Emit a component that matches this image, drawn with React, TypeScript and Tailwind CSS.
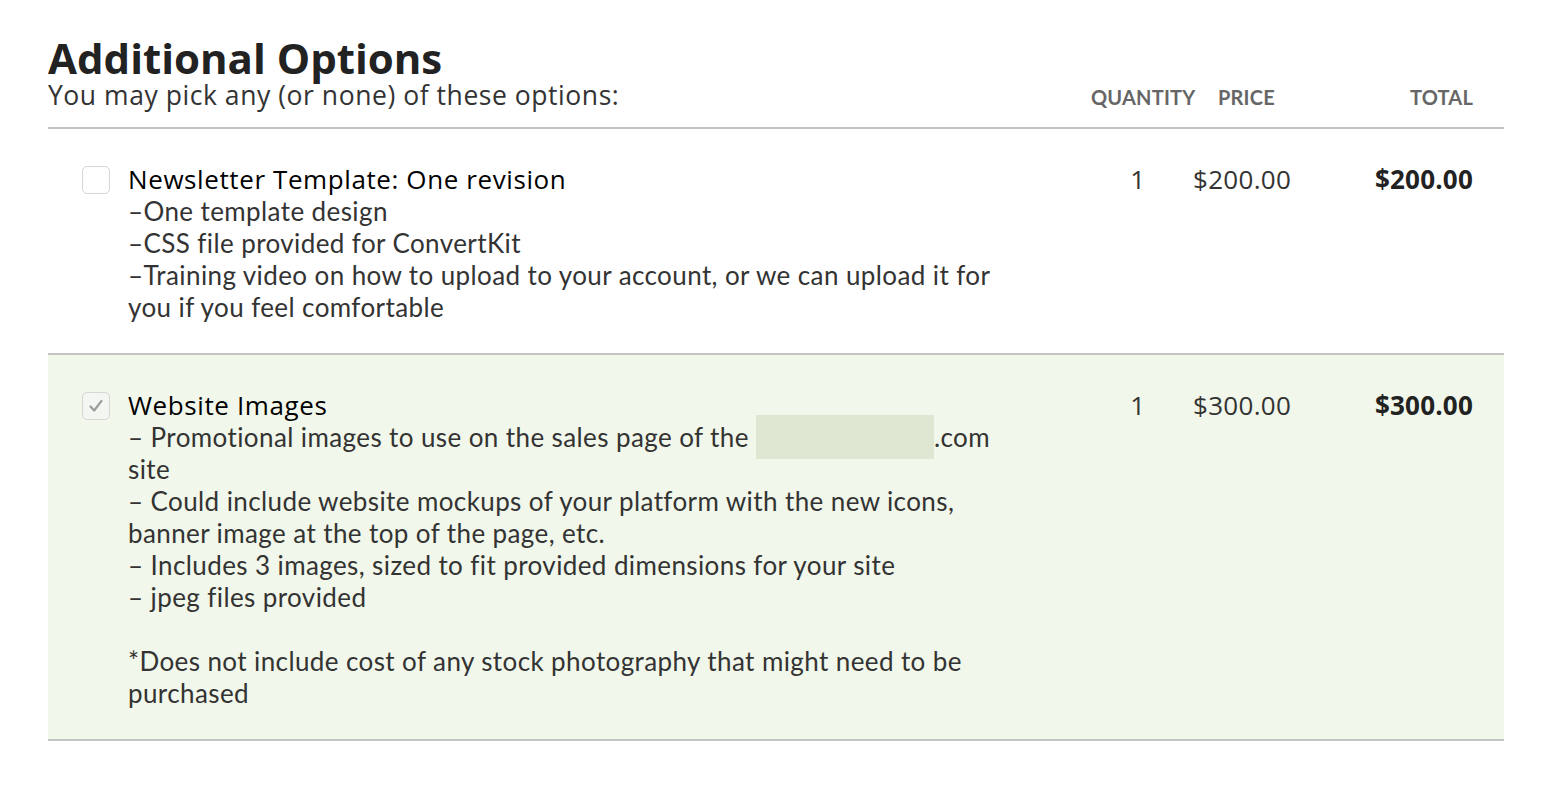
import React from "react";

const lato = { fontFamily: "Lato, 'Open Sans', sans-serif" };
const open = { fontFamily: "'Open Sans', Lato, sans-serif" };

function Check({ checked }: { checked?: boolean }) {
  return (
    <div
      className={`mt-[3px] flex h-[28px] w-[28px] shrink-0 items-center justify-center rounded-[5px] border border-[#d6d6d6] ${
        checked ? "bg-[#f4f6f1]" : "bg-white"
      }`}
    >
      {checked && (
        <svg width="18" height="18" viewBox="0 0 18 18" fill="none">
          <path d="M3.5 9.5 L7.2 13.5 L14.5 3.8" stroke="#9c9c9c" strokeWidth="2.2" fill="none" strokeLinecap="round" strokeLinejoin="round" />
        </svg>
      )}
    </div>
  );
}

function Row({
  checked,
  title,
  lines,
  qty,
  price,
  total,
  bg,
}: {
  checked?: boolean;
  title: string;
  lines: React.ReactNode[];
  qty: string;
  price: string;
  total: string;
  bg?: string;
}) {
  return (
    <div className={`flex border-b-2 border-[#c4c4c4] pt-[34px] pb-[30px] ${bg ?? ""}`}>
      <div className="flex w-[80px] shrink-0 justify-end pr-[18px]">
        <Check checked={checked} />
      </div>
      <div className="w-[882px] shrink-0 text-[26px] leading-[32px] tracking-[0.4px] text-[#333]" style={lato}>
        <div className="text-[26px] tracking-[0.6px] text-black" style={open}>
          {title}
        </div>
        {lines.map((l, i) => (
          <div key={i}>{l === "" ? "\u00a0" : l}</div>
        ))}
      </div>
      <div className="w-[135px] shrink-0 text-right text-[26px] leading-[32px] text-[#333]" style={open}>
        {qty}
      </div>
      <div className="shrink-0 pl-[48px] text-[26px] leading-[32px] tracking-[0.3px] text-[#333]" style={open}>
        {price}
      </div>
      <div className="flex-1 pr-[31px] text-right text-[26px] font-bold leading-[32px] tracking-[0.2px] text-[#222]" style={open}>
        {total}
      </div>
    </div>
  );
}

export default function App() {
  return (
    <div className="min-h-screen bg-white">
      <div className="ml-[48px] w-[1456px] pt-[36px]">
        <div className="flex items-end border-b-2 border-[#c4c4c4] pb-[17px]">
          <div className="flex-1" style={open}>
            <div className="text-[42px] font-bold leading-[44px] text-[#222]">Additional Options</div>
            <div className="text-[26.5px] leading-[30px] tracking-[0.55px] text-[#333]">You may pick any (or none) of these options:</div>
          </div>
          <div
            className="flex items-end pb-[1px] pr-[31px] text-[20px] font-bold uppercase leading-[24px] tracking-[0.2px] text-[#666]"
            style={lato}
          >
            <div className="w-[127px]">Quantity</div>
            <div className="w-[192px]">Price</div>
            <div>Total</div>
          </div>
        </div>
        <Row
          title="Newsletter Template: One revision"
          lines={[
            "\u2013One template design",
            "\u2013CSS file provided for ConvertKit",
            "\u2013Training video on how to upload to your account, or we can upload it for you if you feel comfortable",
          ]}
          qty="1"
          price="$200.00"
          total="$200.00"
        />
        <Row
          checked
          bg="bg-[#f1f7ea]"
          title="Website Images"
          lines={[
            <span>
              – Promotional images to use on the sales page of the{" "}
              <span className="relative inline-block h-[32px] w-[178px] align-top">
                <span className="absolute inset-x-0 -top-[6px] -bottom-[6px] bg-[#dfe7d3]" />
              </span>
              .com site
            </span>,
            "– Could include website mockups of your platform with the new icons, banner image at the top of the page, etc.",
            "– Includes 3 images, sized to fit provided dimensions for your site",
            "– jpeg files provided",
            "",
            "*Does not include cost of any stock photography that might need to be purchased",
          ]}
          qty="1"
          price="$300.00"
          total="$300.00"
        />
      </div>
    </div>
  );
}
